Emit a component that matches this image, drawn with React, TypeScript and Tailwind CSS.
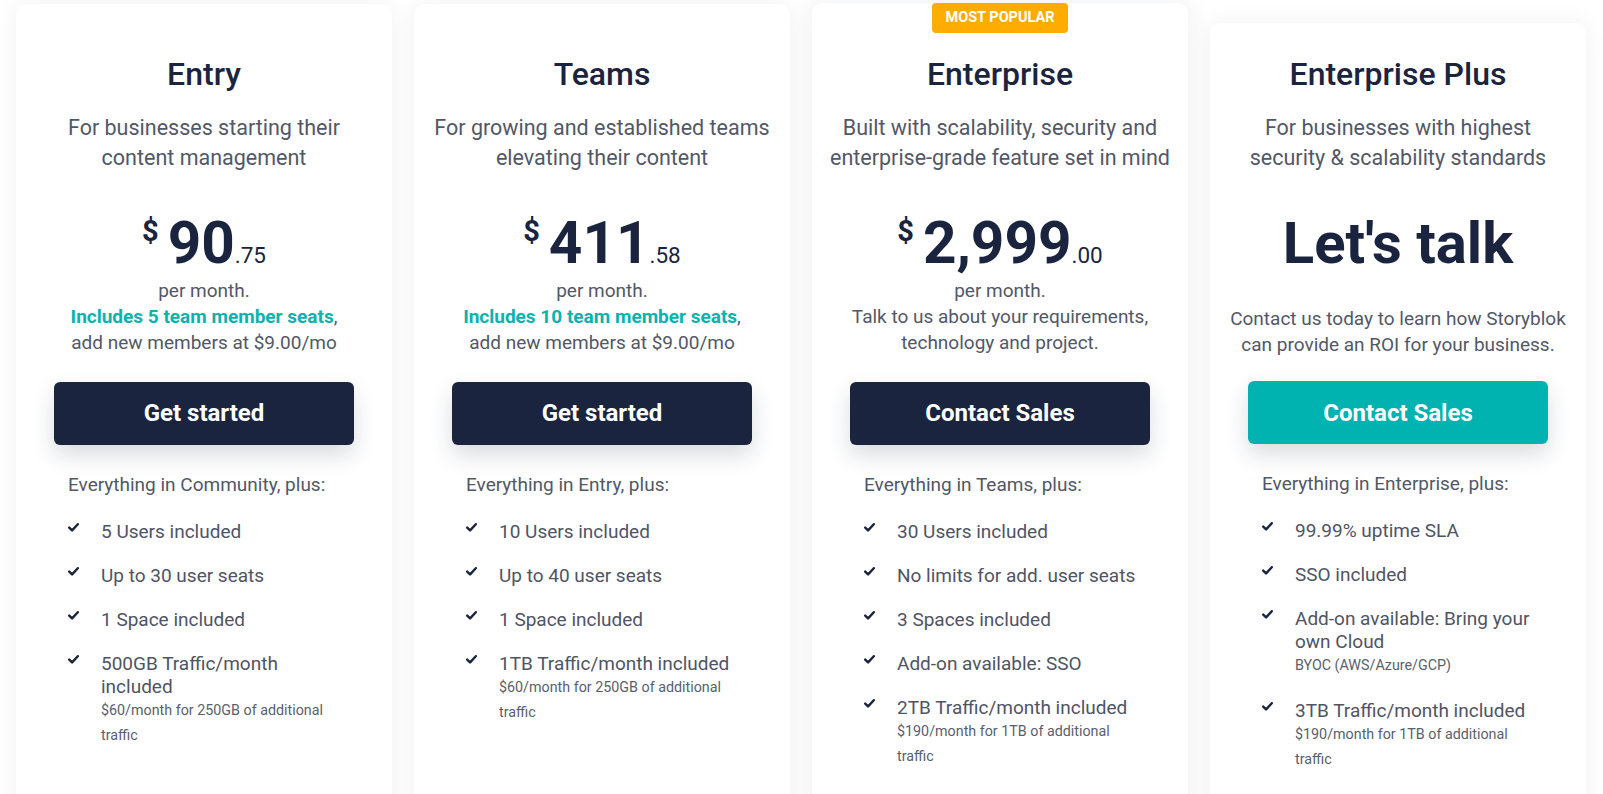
import React from "react";

type Feature = { text: string; sub?: string };
type Card = {
  title: string;
  sub: string[];
  price?: { int: string; dec: string };
  desc: React.ReactNode;
  descLines: number;
  button: string;
  teal?: boolean;
  popular?: boolean;
  last?: boolean;
  intro: string;
  features: Feature[];
};

const Teal = ({ children }: { children: React.ReactNode }) => (
  <span className="font-bold text-[#09b3af]">{children}</span>
);

const cards: Card[] = [
  {
    title: "Entry",
    sub: ["For businesses starting their", "content management"],
    price: { int: "90", dec: ".75" },
    desc: (
      <>
        per month.
        <br />
        <Teal>Includes 5 team member seats</Teal>,
        <br />
        add new members at $9.00/mo
      </>
    ),
    descLines: 3,
    button: "Get started",
    intro: "Everything in Community, plus:",
    features: [
      { text: "5 Users included" },
      { text: "Up to 30 user seats" },
      { text: "1 Space included" },
      { text: "500GB Traffic/month included", sub: "$60/month for 250GB of additional traffic" },
    ],
  },
  {
    title: "Teams",
    sub: ["For growing and established teams", "elevating their content"],
    price: { int: "411", dec: ".58" },
    desc: (
      <>
        per month.
        <br />
        <Teal>Includes 10 team member seats</Teal>,
        <br />
        add new members at $9.00/mo
      </>
    ),
    descLines: 3,
    button: "Get started",
    intro: "Everything in Entry, plus:",
    features: [
      { text: "10 Users included" },
      { text: "Up to 40 user seats" },
      { text: "1 Space included" },
      { text: "1TB Traffic/month included", sub: "$60/month for 250GB of additional traffic" },
    ],
  },
  {
    title: "Enterprise",
    sub: ["Built with scalability, security and", "enterprise-grade feature set in mind"],
    price: { int: "2,999", dec: ".00" },
    desc: (
      <>
        per month.
        <br />
        Talk to us about your requirements,
        <br />
        technology and project.
      </>
    ),
    descLines: 3,
    button: "Contact Sales",
    popular: true,
    intro: "Everything in Teams, plus:",
    features: [
      { text: "30 Users included" },
      { text: "No limits for add. user seats" },
      { text: "3 Spaces included" },
      { text: "Add-on available: SSO" },
      { text: "2TB Traffic/month included", sub: "$190/month for 1TB of additional traffic" },
    ],
  },
  {
    title: "Enterprise Plus",
    sub: ["For businesses with highest", "security & scalability standards"],
    desc: (
      <>
        Contact us today to learn how Storyblok
        <br />
        can provide an ROI for your business.
      </>
    ),
    descLines: 2,
    button: "Contact Sales",
    teal: true,
    last: true,
    intro: "Everything in Enterprise, plus:",
    features: [
      { text: "99.99% uptime SLA" },
      { text: "SSO included" },
      { text: "Add-on available: Bring your own Cloud", sub: "BYOC (AWS/Azure/GCP)" },
      { text: "3TB Traffic/month included", sub: "$190/month for 1TB of additional traffic" },
    ],
  },
];

const Check = () => (
  <svg width="11" height="9" viewBox="0 0 11 9" className="mt-[3px] shrink-0">
    <path d="M1.2 4.6 L4.1 7.4 L9.8 1.2" fill="none" stroke="#1b243f" strokeWidth="2.4" strokeLinecap="round" strokeLinejoin="round" />
  </svg>
);

function PlanCard({ c }: { c: Card }) {
  return (
    <div
      className={
        "relative w-[376px] shrink-0 rounded-[10px] bg-white " +
        (c.popular
          ? "mt-[-1px] h-[820px] pt-[52px] shadow-[0_0_28px_rgba(30,36,63,0.08)]"
          : c.last
          ? "mt-[19px] h-[800px] pt-[32px] shadow-[0_0_24px_rgba(30,36,63,0.06)]"
          : "h-[820px] pt-[51px] shadow-[0_0_24px_rgba(30,36,63,0.06)]")
      }
    >
      {c.popular && (
        <div className="absolute left-1/2 top-0 flex h-[30px] w-[136px] -translate-x-1/2 items-center justify-center rounded-[4px] bg-[#ffac00] text-[14.5px] font-bold text-white">
          MOST POPULAR
        </div>
      )}
      <h2 className="text-center text-[32px] font-medium leading-[38px] text-[#1b243f]">{c.title}</h2>
      <p className="mt-[20px] text-center text-[21.5px] leading-[30px] text-[#525867]">
        {c.sub[0]}
        <br />
        {c.sub[1]}
      </p>
      {c.price ? (
        <div className="mt-[41px] flex items-baseline justify-center text-[#1b243f]">
          <span className="mr-[9px] mt-[3px] self-start text-[29px] font-bold leading-none">$</span>
          <span className="text-[58.5px] font-bold leading-none">{c.price.int}</span>
          <span className="text-[22.5px] leading-none">{c.price.dec}</span>
        </div>
      ) : (
        <div className="mt-[41px] text-center text-[58px] font-bold leading-none text-[#1b243f]">Let's talk</div>
      )}
      <div className="mt-[5px] h-[78px] text-center text-[19px] leading-[26px] text-[#525867]">
        {c.descLines === 2 ? <div className="pt-[29px]">{c.desc}</div> : c.desc}
      </div>
      <button
        className={
          "mx-auto mt-[26px] flex h-[63px] w-[300px] items-center justify-center rounded-[6px] text-[24px] font-bold text-white shadow-[0_10px_22px_rgba(27,36,63,0.16)] " +
          (c.teal ? "bg-[#00b3b0]" : "bg-[#1b243f]")
        }
      >
        {c.button}
      </button>
      <div className="ml-[52px] mt-[28px]">
        <p className="text-[19px] leading-[23px] text-[#525867]">{c.intro}</p>
        <ul className="mt-[24px] flex flex-col gap-[21px]">
          {c.features.map((f) => (
            <li key={f.text} className="flex">
              <div className="w-[33px] shrink-0">
                <Check />
              </div>
              <div className="w-[246px]">
                <div className="text-[19px] leading-[23px] text-[#4f5465]">{f.text}</div>
                {f.sub && <div className="text-[14.3px] leading-[25px] text-[#5a5f6d]">{f.sub}</div>}
              </div>
            </li>
          ))}
        </ul>
      </div>
    </div>
  );
}

export default function App() {
  return (
    <div className="h-[794px] w-full overflow-hidden bg-white font-[Roboto,sans-serif]">
      <div className="flex gap-[22px] px-[16px] pt-[4px]">
        {cards.map((c) => (
          <PlanCard key={c.title} c={c} />
        ))}
      </div>
    </div>
  );
}
